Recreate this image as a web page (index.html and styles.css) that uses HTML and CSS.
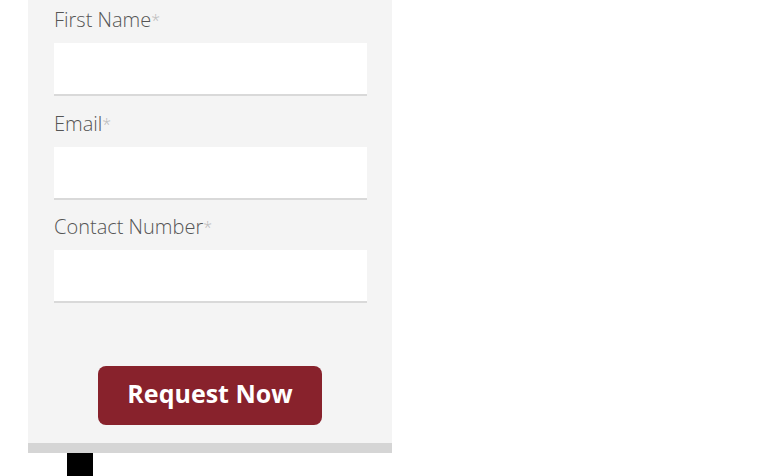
FILE: index.html
```html
<!DOCTYPE html>
<html>
<head>
<meta charset="utf-8">
<link rel="stylesheet" href="styles.css">
</head>
<body>
<div class="wrap">
  <form class="panel">
    <div class="field">
      <label class="label">First Name<span class="req">*</span></label>
      <div class="input"></div>
    </div>
    <div class="field">
      <label class="label">Email<span class="req">*</span></label>
      <div class="input"></div>
    </div>
    <div class="field">
      <label class="label">Contact Number<span class="req">*</span></label>
      <div class="input"></div>
    </div>
    <div class="actions">
      <button type="button" class="btn">Request Now</button>
    </div>
  </form>
  <div class="bar"></div>
  <div class="square"></div>
</div>
</body>
</html>
```
FILE: styles.css
```css
html, body {
  margin: 0;
  padding: 0;
  background: #fff;
  overflow: hidden;
}
.wrap {
  margin-left: 28px;
  width: 364px;
}
.panel {
  background: #f4f4f4;
  padding: 6px 25px 18px 26px;
  margin: 0;
  font-family: "Open Sans", "Liberation Sans", sans-serif;
}
.field {
  display: flex;
  flex-direction: column;
  margin-bottom: 14px;
}
.field:nth-child(2) {
  margin-bottom: 13px;
}
.label {
  font-size: 20px;
  line-height: 28px;
  font-weight: 300;
  color: #555;
  margin-bottom: 9px;
}
.req {
  color: #bbb;
  font-size: 16px;
  vertical-align: top;
}
.input {
  height: 51px;
  background: #fff;
  border-bottom: 2px solid #d9d9d9;
}
.actions {
  display: flex;
  justify-content: flex-start;
  padding-top: 49px;
}
.btn {
  margin-left: 44px;
  width: 224px;
  height: 59px;
  background: #88222c;
  color: #fff;
  border: none;
  border-radius: 8px;
  font-family: "Open Sans", "Liberation Sans", sans-serif;
  font-weight: 700;
  font-size: 25px;
  padding: 0 0 6px 0;
}
.bar {
  height: 10px;
  background: #d5d5d5;
}
.square {
  margin-left: 39px;
  width: 26px;
  height: 30px;
  background: #000;
}
```
